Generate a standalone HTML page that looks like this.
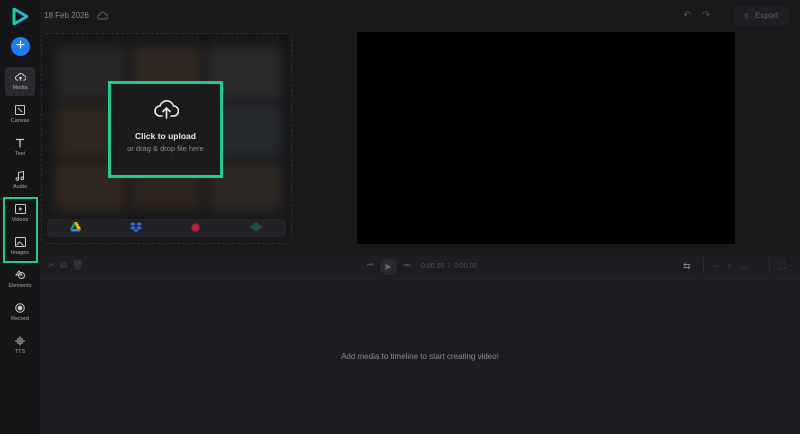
<!DOCTYPE html><html><head><style>
*{margin:0;padding:0;box-sizing:border-box}
body{width:800px;height:434px;background:#19191c;font-family:"Liberation Sans",sans-serif;position:relative;overflow:hidden;color:#888}
.a{position:absolute}
.side{left:0;top:0;width:40px;height:434px;background:#151518}
.it{position:absolute;left:5px;width:30px;height:30px;text-align:center;font-size:5.5px;color:#aaa}
.it svg{display:block;margin:5px auto 3px}
.th{position:absolute;filter:blur(5px);border-radius:3px}
</style></head><body>
<div class="a side"></div>
<svg class="a" style="left:12px;top:8px" width="16" height="17" viewBox="0 0 16 17"><path d="M2 1 L15 8.5 L2 16 Z" fill="none" stroke="#29b3d6" stroke-width="3" stroke-linejoin="round"/><path d="M2 1 L2 16" stroke="#1fc99a" stroke-width="3"/></svg>
<div class="a" style="left:44px;top:11px;font-size:8px;color:#8a8a90">18 Feb 2026</div>
<svg class="a" style="left:97px;top:11px" width="11" height="9" viewBox="0 0 11 9"><path d="M3 8h5.5a2.3 2.3 0 0 0 0-4.6A3 3 0 0 0 2.6 4 2 2 0 0 0 3 8z" fill="none" stroke="#666" stroke-width="1"/></svg>
<div class="a" style="left:11px;top:37px;width:19px;height:19px;border-radius:50%;background:#1a7ff0;color:#fff;font-size:16px;line-height:18px;text-align:center">+</div>
<div class="it" style="top:67px;height:29px;background:#2a2a2f;border-radius:3px"><svg width="11" height="10" viewBox="0 0 12 10"><path d="M3.5 8.5h-.5a2.5 2.5 0 0 1 0-5 3.5 3.5 0 0 1 6.5 0 2.5 2.5 0 0 1 0 5h-.5M6 9V5M4.5 6.5 6 5l1.5 1.5" fill="none" stroke="#ddd" stroke-width="1"/></svg>Media</div>
<div class="it" style="top:100px"><svg width="10" height="10"><rect x=".5" y=".5" width="9" height="9" rx="1" fill="none" stroke="#ccc"/><path d="M3 3l4 4" stroke="#ccc"/></svg>Canvas</div>
<div class="it" style="top:133px"><svg width="10" height="10"><path d="M1 1.5h8M5 1.5v8" stroke="#ccc" stroke-width="1.2"/></svg>Text</div>
<div class="it" style="top:166px"><svg width="10" height="10"><path d="M3.5 8V1.5l5-1v6.5" fill="none" stroke="#ccc"/><circle cx="2.3" cy="8" r="1.3" fill="none" stroke="#ccc"/><circle cx="7.3" cy="7.3" r="1.3" fill="none" stroke="#ccc"/></svg>Audio</div>
<div class="it" style="top:199px"><svg width="11" height="10"><rect x=".5" y=".5" width="10" height="9" rx="1" fill="none" stroke="#ccc"/><path d="M4.3 3v4l3-2z" fill="#ccc"/></svg>Videos</div>
<div class="it" style="top:232px"><svg width="11" height="10"><rect x=".5" y=".5" width="10" height="9" rx="1" fill="none" stroke="#ccc"/><path d="M1.5 8l3-3 4 3.5" fill="none" stroke="#ccc"/></svg>Images</div>
<div class="it" style="top:265px"><svg width="11" height="10"><circle cx="6.5" cy="5.5" r="3" fill="none" stroke="#ccc"/><path d="M4 1l3 4H1z" fill="none" stroke="#ccc"/></svg>Elements</div>
<div class="it" style="top:298px"><svg width="10" height="10"><circle cx="5" cy="5" r="4.3" fill="none" stroke="#ccc"/><circle cx="5" cy="5" r="2.4" fill="#ccc"/></svg>Record</div>
<div class="it" style="top:331px"><svg width="11" height="10"><path d="M1 4v2M3 2v6M5 0.5v9M7 2v6M9 4v2" stroke="#ccc"/></svg>TTS</div>
<div class="a" style="left:3px;top:197px;width:35px;height:66px;border:2.5px solid #1fcb8b"></div>
<div class="a" style="left:41px;top:33px;width:251px;height:211px;border:1px dashed #2e2e33;border-radius:5px;background:#17171a;overflow:hidden">
<div class="th" style="left:13px;top:12px;width:72px;height:56px;background:#262528"></div>
<div class="th" style="left:89px;top:12px;width:72px;height:56px;background:#2f2722"></div>
<div class="th" style="left:166px;top:12px;width:73px;height:56px;background:#2a292c"></div>
<div class="th" style="left:13px;top:70px;width:72px;height:54px;background:#2f2620"></div>
<div class="th" style="left:89px;top:70px;width:72px;height:54px;background:#262629"></div>
<div class="th" style="left:166px;top:70px;width:73px;height:54px;background:#26292d"></div>
<div class="th" style="left:13px;top:127px;width:72px;height:50px;background:#312720"></div>
<div class="th" style="left:89px;top:127px;width:72px;height:50px;background:#2c251f"></div>
<div class="th" style="left:166px;top:127px;width:73px;height:50px;background:#2d2824"></div>
<div class="a" style="left:5px;top:185px;width:239px;height:18px;background:#222226;border-radius:3px"></div>
</div>
<svg class="a" style="left:70px;top:222px" width="11" height="10" viewBox="0 0 11 10"><path d="M4 0h3l4 7H7z" fill="#f4b400"/><path d="M4 0l-4 7 1.5 2.5 4-7z" fill="#0f9d58"/><path d="M1.5 9.5h8l1.5-2.5H3z" fill="#4285f4"/></svg>
<svg class="a" style="left:130px;top:222px" width="12" height="10" viewBox="0 0 12 10"><path d="M3 0 0 2l3 2 3-2zM9 0 6 2l3 2 3-2zM0 6l3 2 3-2-3-2zM12 6 9 8 6 6l3-2zM3 8.7l3 1.3 3-1.3L6 7z" fill="#2a6ed6"/></svg>
<div class="a" style="left:191px;top:223px;width:9px;height:9px;border-radius:50%;border:1px solid #7a2030;background:#b02540"></div>
<svg class="a" style="left:250px;top:222px" width="12" height="10"><path d="M1 4v2M3 2.5v5M5 1v8M7 0.5v9M9 2.5v5M11 4v2" stroke="#1a7a7a"/></svg>
<div class="a" style="left:108px;top:81px;width:115px;height:97px;border:3px solid #1fcb8b;background:#1b1b1e"></div>
<svg class="a" style="left:154px;top:98px" width="25" height="21" viewBox="0 0 25 21"><path d="M8 18H6a5 5 0 0 1 0-10 7 7 0 0 1 13.5 0 5 5 0 0 1 0 10h-2.5M12.5 20V10M9 13.5l3.5-3.5 3.5 3.5" fill="none" stroke="#eee" stroke-width="1.6" stroke-linecap="round"/></svg>
<div class="a" style="left:108px;top:131px;width:115px;text-align:center;font-size:8.5px;font-weight:bold;color:#e8e8e8">Click to upload</div>
<div class="a" style="left:108px;top:144px;width:115px;text-align:center;font-size:7.5px;color:#8a8a90">or drag &amp; drop file here</div>
<div class="a" style="left:357px;top:32px;width:378px;height:212px;background:#000"></div>
<div class="a" style="left:683px;top:10px;font-size:10px;color:#555">↶</div>
<div class="a" style="left:702px;top:10px;font-size:10px;color:#555">↷</div>
<div class="a" style="left:734px;top:7px;width:55px;height:18px;background:#202024;border-radius:3px;font-size:8px;color:#5d5d62;line-height:18px;padding-left:21px">Export</div>
<div class="a" style="left:743px;top:12px;font-size:8px;color:#5d5d62">⇪</div>
<div class="a" style="left:40px;top:255px;width:760px;height:179px;background:#1d1d21"></div>
<div class="a" style="left:40px;top:278px;width:760px;height:1px;background:#252529"></div>
<div class="a" style="left:48px;top:260px;font-size:9px;color:#444">✂ &nbsp;⧉ &nbsp;🗑</div>
<div class="a" style="left:367px;top:262px;font-size:7px;color:#555">⏮</div>
<div class="a" style="left:380px;top:258px;width:17px;height:17px;border-radius:50%;background:#2a2a2e;color:#666;font-size:8px;line-height:17px;text-align:center">▶</div>
<div class="a" style="left:404px;top:262px;font-size:7px;color:#555">⏭</div>
<div class="a" style="left:421px;top:263px;font-size:7px;color:#555">0:00.00 &nbsp;/ &nbsp;0:00.00</div>
<div class="a" style="left:683px;top:261px;font-size:9px;color:#888">⇆</div>
<div class="a" style="left:703px;top:258px;width:1px;height:16px;background:#2c2c30"></div>
<div class="a" style="left:714px;top:261px;font-size:9px;color:#444">− &nbsp;&nbsp;+ &nbsp;&nbsp;↔</div>
<div class="a" style="left:769px;top:258px;width:1px;height:16px;background:#2c2c30"></div>
<div class="a" style="left:779px;top:261px;font-size:9px;color:#555">⛶</div>
<div class="a" style="left:40px;top:352px;width:760px;text-align:center;font-size:8px;color:#8a8a90">Add media to timeline to start creating video!</div>
</body></html>
